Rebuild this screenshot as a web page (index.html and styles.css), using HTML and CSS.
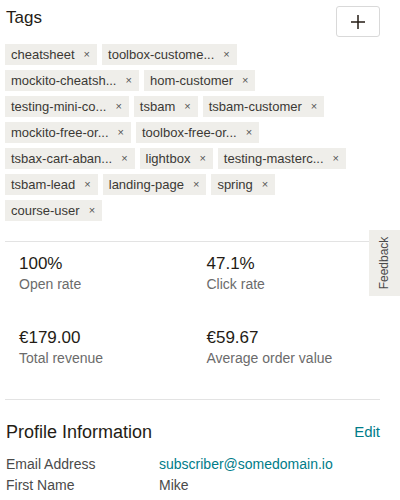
FILE: index.html
```html
<!DOCTYPE html>
<html lang="en">
<head>
<meta charset="utf-8">
<title>Subscriber</title>
<link rel="stylesheet" href="styles.css">
</head>
<body>
<div class="page">
  <section class="tags">
    <div class="tags-header">
      <h2 class="title">Tags</h2>
      <button class="add-btn" aria-label="Add tag">
        <svg width="16" height="16" viewBox="0 0 16 16"><path d="M8 1v14M1 8h14" stroke="#241c15" stroke-width="1.5" fill="none"/></svg>
      </button>
    </div>
    <ul class="tag-list">
      <li class="tag"><span>cheatsheet</span><span class="x">×</span></li>
      <li class="tag"><span>toolbox-custome...</span><span class="x">×</span></li>
      <li class="tag"><span>mockito-cheatsh...</span><span class="x">×</span></li>
      <li class="tag"><span>hom-customer</span><span class="x">×</span></li>
      <li class="tag"><span>testing-mini-co...</span><span class="x">×</span></li>
      <li class="tag"><span>tsbam</span><span class="x">×</span></li>
      <li class="tag"><span>tsbam-customer</span><span class="x">×</span></li>
      <li class="tag"><span>mockito-free-or...</span><span class="x">×</span></li>
      <li class="tag"><span>toolbox-free-or...</span><span class="x">×</span></li>
      <li class="tag"><span>tsbax-cart-aban...</span><span class="x">×</span></li>
      <li class="tag"><span>lightbox</span><span class="x">×</span></li>
      <li class="tag"><span>testing-masterc...</span><span class="x">×</span></li>
      <li class="tag"><span>tsbam-lead</span><span class="x">×</span></li>
      <li class="tag"><span>landing-page</span><span class="x">×</span></li>
      <li class="tag"><span>spring</span><span class="x">×</span></li>
      <li class="tag"><span>course-user</span><span class="x">×</span></li>
    </ul>
  </section>

  <section class="stats">
    <div class="stat"><div class="value">100%</div><div class="label">Open rate</div></div>
    <div class="stat"><div class="value">47.1%</div><div class="label">Click rate</div></div>
    <div class="stat"><div class="value">€179.00</div><div class="label">Total revenue</div></div>
    <div class="stat"><div class="value">€59.67</div><div class="label">Average order value</div></div>
  </section>

  <section class="profile">
    <div class="profile-header">
      <h2 class="profile-title">Profile Information</h2>
      <a class="edit" href="#">Edit</a>
    </div>
    <dl class="fields">
      <dt>Email Address</dt><dd class="link">subscriber@somedomain.io</dd>
      <dt>First Name</dt><dd>Mike</dd>
    </dl>
  </section>
</div>
<div class="feedback"><span>Feedback</span></div>
</body>
</html>
```

FILE: styles.css
```css
* { box-sizing: border-box; }
html, body { margin: 0; padding: 0; background: #fff; }
body {
  font-family: "Liberation Sans", Arial, sans-serif;
  color: #241c15;
  overflow: hidden;
}
.page {
  width: 380px;
  padding: 6px 0 0 5px;
}
.tags-header {
  display: flex;
  justify-content: space-between;
  align-items: flex-start;
}
.title {
  margin: 2px 0 0 1px;
  font-size: 17px;
  line-height: 20px;
  font-weight: 400;
}
.add-btn {
  width: 44px;
  height: 31px;
  padding: 0;
  background: #fff;
  border: 1px solid #d9d9d9;
  border-radius: 3px;
  display: flex;
  align-items: center;
  justify-content: center;
}
.add-btn svg { display: block; }
.tag-list {
  list-style: none;
  margin: 7px 0 0;
  padding: 0;
  width: 368px;
  display: flex;
  flex-wrap: wrap;
  gap: 5px 5px;
}
.tag {
  display: flex;
  align-items: center;
  height: 21px;
  line-height: 21px;
  padding: 0 7px 0 6px;
  background: #efeeea;
  font-size: 13px;
  color: #3b3935;
  white-space: nowrap;
}
.tag .x {
  margin-left: 9px;
  font-size: 11px;
  color: #555;
}
.stats {
  margin-top: 20px;
  border-top: 1px solid #e3e3e3;
  padding: 11px 0 31px;
  display: grid;
  grid-template-columns: 1fr 1fr;
  row-gap: 33px;
  border-bottom: 1px solid #e3e3e3;
}
.stat { padding-left: 14px; }
.value {
  font-size: 17px;
  line-height: 21px;
}
.label {
  font-size: 14px;
  line-height: 20px;
  color: #6b6b6b;
}
.profile { padding-top: 21px; }
.profile-header {
  display: flex;
  justify-content: space-between;
  align-items: center;
}
.profile-title {
  margin: 0 0 0 1px;
  font-size: 18px;
  line-height: 22px;
  font-weight: 400;
}
.edit {
  font-size: 15px;
  line-height: 18px;
  color: #007c89;
  text-decoration: none;
}
.fields {
  margin: 11px 0 0 1px;
  display: grid;
  grid-template-columns: 153px 1fr;
  font-size: 14px;
  line-height: 21px;
}
.fields dt { color: #4a4a4a; }
.fields dd { margin: 0; color: #4a4a4a; }
.fields dd.link { color: #007c89; }
.feedback {
  position: fixed;
  right: 0;
  top: 230px;
  width: 31px;
  height: 66px;
  background: #efeeea;
  display: flex;
  align-items: center;
  justify-content: center;
}
.feedback span {
  transform: rotate(-90deg);
  font-size: 12px;
  color: #4a4a4a;
  white-space: nowrap;
}
```
